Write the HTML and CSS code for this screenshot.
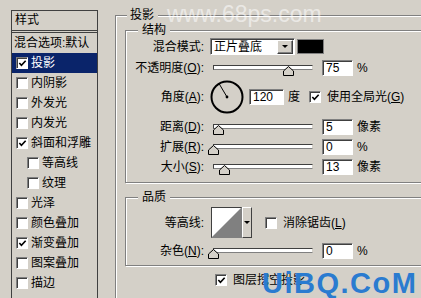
FILE: index.html
```html
<!DOCTYPE html>
<html lang="zh">
<head>
<meta charset="utf-8">
<title>图层样式</title>
<link rel="stylesheet" href="styles.css">
</head>
<body>
<div class="dialog">
  <div class="styles-panel">
    <div class="panel-head">样式</div>
    <div class="item plain">混合选项:默认</div>
    <div class="item top sel"><span class="cb"><svg viewBox="0 0 10 10"><polyline points="1.5,4.5 3.8,7 8.5,2"/></svg></span>投影</div>
    <div class="item top"><span class="cb"></span>内阴影</div>
    <div class="item top"><span class="cb"></span>外发光</div>
    <div class="item top"><span class="cb"></span>内发光</div>
    <div class="item top"><span class="cb"><svg viewBox="0 0 10 10"><polyline points="1.5,4.5 3.8,7 8.5,2"/></svg></span>斜面和浮雕</div>
    <div class="item sub"><span class="cb"></span>等高线</div>
    <div class="item sub"><span class="cb"></span>纹理</div>
    <div class="item top"><span class="cb"></span>光泽</div>
    <div class="item top"><span class="cb"></span>颜色叠加</div>
    <div class="item top"><span class="cb"><svg viewBox="0 0 10 10"><polyline points="1.5,4.5 3.8,7 8.5,2"/></svg></span>渐变叠加</div>
    <div class="item top"><span class="cb"></span>图案叠加</div>
    <div class="item top"><span class="cb"></span>描边</div>
  </div>

  <div class="main">
    <fieldset class="grp outer">
      <legend>投影</legend>

      <fieldset class="grp struct">
        <legend>结构</legend>

        <div class="row r-blend">
          <span class="lbl">混合模式:</span>
          <div class="select"><span class="sel-text">正片叠底</span><span class="sel-btn"><i class="tri"></i></span></div>
          <span class="swatch"></span>
        </div>

        <div class="row r-slider r-opacity">
          <span class="lbl">不透明度(<u>O</u>):</span>
          <div class="slider"><span class="track"></span><span class="thumb" style="left:75px"><svg viewBox="0 0 11 10"><polygon points="5.5,0.5 10.5,5 10.5,9.5 0.5,9.5 0.5,5"/></svg></span></div>
          <span class="num">75</span><span class="unit">%</span>
        </div>

        <div class="row r-angle">
          <span class="lbl">角度(<u>A</u>):</span>
          <svg class="dial" viewBox="0 0 34 34"><circle cx="17" cy="17" r="15.5"/><line x1="17" y1="17" x2="9" y2="3.5"/><circle class="dot" cx="17" cy="17" r="1.4"/></svg>
          <span class="num wide">120</span><span class="unit">度</span>
          <span class="cb gl"><svg viewBox="0 0 10 10"><polyline points="1.5,4.5 3.8,7 8.5,2"/></svg></span>
          <span class="cb-text">使用全局光(<u>G</u>)</span>
        </div>

        <div class="row r-slider r-dist">
          <span class="lbl">距离(<u>D</u>):</span>
          <div class="slider"><span class="track"></span><span class="thumb" style="left:5px"><svg viewBox="0 0 11 10"><polygon points="5.5,0.5 10.5,5 10.5,9.5 0.5,9.5 0.5,5"/></svg></span></div>
          <span class="num">5</span><span class="unit">像素</span>
        </div>

        <div class="row r-slider r-next">
          <span class="lbl">扩展(<u>R</u>):</span>
          <div class="slider"><span class="track"></span><span class="thumb" style="left:0px"><svg viewBox="0 0 11 10"><polygon points="5.5,0.5 10.5,5 10.5,9.5 0.5,9.5 0.5,5"/></svg></span></div>
          <span class="num">0</span><span class="unit">%</span>
        </div>

        <div class="row r-slider r-next">
          <span class="lbl">大小(<u>S</u>):</span>
          <div class="slider"><span class="track"></span><span class="thumb" style="left:11px"><svg viewBox="0 0 11 10"><polygon points="5.5,0.5 10.5,5 10.5,9.5 0.5,9.5 0.5,5"/></svg></span></div>
          <span class="num">13</span><span class="unit">像素</span>
        </div>
      </fieldset>

      <fieldset class="grp quality">
        <legend>品质</legend>

        <div class="row r-contour">
          <span class="lbl">等高线:</span>
          <div class="contour">
            <svg class="contour-img" viewBox="0 0 29 29" preserveAspectRatio="none"><polygon class="lo" points="0,29 29,0 29,29"/></svg>
            <span class="contour-btn"><i class="tri"></i></span>
          </div>
          <span class="cb aa"></span>
          <span class="cb-text">消除锯齿(<u>L</u>)</span>
        </div>

        <div class="row r-slider r-noise">
          <span class="lbl">杂色(<u>N</u>):</span>
          <div class="slider"><span class="track"></span><span class="thumb" style="left:0px"><svg viewBox="0 0 11 10"><polygon points="5.5,0.5 10.5,5 10.5,9.5 0.5,9.5 0.5,5"/></svg></span></div>
          <span class="num">0</span><span class="unit">%</span>
        </div>
      </fieldset>

      <div class="row r-knock">
        <span class="cb"><svg viewBox="0 0 10 10"><polyline points="1.5,4.5 3.8,7 8.5,2"/></svg></span>
        <span class="cb-text">图层挖空投影</span>
      </div>
    </fieldset>
  </div>
</div>
<div class="wm-top">www.68ps.com</div>
<div class="wm-bottom">UiBQ.CoM</div>
</body>
</html>
```
FILE: styles.css
```css
* { box-sizing: border-box; }

body {
  margin: 0;
  width: 421px;
  height: 298px;
  overflow: hidden;
  position: relative;
  background: #d4d0c8;
  color: #000;
  font-family: "Liberation Sans", "Noto Sans CJK SC", sans-serif;
  font-size: 12px;
  line-height: 14px;
}

u { text-decoration: underline; }

.dialog {
  display: flex;
  height: 298px;
  overflow: hidden;
}

/* ---------- left list ---------- */
.styles-panel {
  flex: none;
  width: 87px;
  margin: 10px 0 0 11px;
  border: 1px solid #404040;
  border-bottom: none;
}

.panel-head {
  height: 22px;
  line-height: 19px;
  padding-left: 3px;
  border-bottom: 3px double #404040;
}

.item {
  height: 20px;
  display: flex;
  align-items: center;
  white-space: nowrap;
}
.item.plain { padding-left: 2px; }
.item.top { padding-left: 4px; }
.item.sub { padding-left: 15px; }
.item .cb { margin-right: 3px; }
.item.sel { background: #0a246a; color: #fff; }

/* ---------- checkbox ---------- */
.cb {
  flex: none;
  display: inline-flex;
  align-items: center;
  justify-content: center;
  width: 12px;
  height: 12px;
  background: #fff;
  border: 1px solid;
  border-color: #808080 #fff #fff #808080;
  box-shadow: inset 1px 1px 0 #404040;
}
.cb svg {
  width: 9px;
  height: 9px;
  margin: 1px 0 0 1px;
}
.cb polyline {
  fill: none;
  stroke: #000;
  stroke-width: 1.8;
}

/* ---------- right side ---------- */
.main {
  flex: none;
  width: 330px;
  margin-left: 17px;
}

fieldset.grp {
  margin: 0;
  min-width: 0;
  border: 1px solid #808080;
  box-shadow: inset 1px 1px 0 #fff, 1px 1px 0 #fff;
}
fieldset.grp > legend {
  background: #d4d0c8;
  line-height: 14px;
  height: 14px;
}

.outer {
  width: 330px;
  min-height: 320px;
  margin-top: 8px !important;
  padding: 1px 0 0 9px;
}
.outer > legend {
  margin-left: 2px;
  padding: 0 4px 0 3px;
}

.struct,
.quality {
  width: 100%;
}
.struct > legend,
.quality > legend {
  margin-left: 12px;
  padding: 0 4px;
}
.struct { padding: 1px 0 7px 0; }
.quality { margin-top: 7px !important; padding: 3px 0 6px 0; }

.row {
  display: flex;
  align-items: center;
  white-space: nowrap;
}
.lbl {
  flex: none;
  width: 78px;
  text-align: right;
}

/* blend mode */
.r-blend { height: 17px; }
.select {
  flex: none;
  display: flex;
  align-items: center;
  width: 85px;
  height: 17px;
  margin-left: 6px;
  padding-left: 3px;
  background: #fff;
  border: 1px solid;
  border-color: #808080 #fff #fff #808080;
  box-shadow: inset 1px 1px 0 #404040;
}
.sel-text { flex: 1; }
.sel-btn {
  flex: none;
  display: flex;
  align-items: center;
  justify-content: center;
  width: 16px;
  height: 14px;
  margin-right: 1px;
  background: #d4d0c8;
  border: 1px solid;
  border-color: #fff #404040 #404040 #fff;
  box-shadow: inset -1px -1px 0 #808080;
}
.tri {
  display: block;
  width: 0;
  height: 0;
  border-left: 3px solid transparent;
  border-right: 3px solid transparent;
  border-top: 3px solid #000;
}
.swatch {
  flex: none;
  width: 27px;
  height: 15px;
  margin-left: 2px;
  background: #000;
  border: 1px solid #808080;
}

/* sliders */
.r-slider { height: 16px; }
.r-opacity { margin-top: 5px; }
.r-dist { margin-top: 5px; }
.r-next { margin-top: 4px; }
.r-noise { margin-top: 5px; }

.slider {
  flex: none;
  position: relative;
  width: 110px;
  height: 16px;
  margin-left: 4px;
}
.track {
  display: block;
  width: 100px;
  height: 5px;
  margin: 5px 0 0 5px;
  background: #fff;
  border: 1px solid;
  border-color: #404040 #d4d0c8 #808080 #404040;
}
.thumb {
  position: absolute;
  top: 6px;
  width: 11px;
  height: 10px;
}
.thumb svg {
  display: block;
  width: 11px;
  height: 10px;
}
.thumb polygon {
  fill: #d4d0c8;
  stroke: #000;
  stroke-width: 1;
}

.num {
  flex: none;
  width: 31px;
  height: 16px;
  margin-left: 4px;
  padding-left: 3px;
  line-height: 14px;
  background: #fff;
  border: 1px solid;
  border-color: #808080 #fff #fff #808080;
  box-shadow: inset 1px 1px 0 #404040;
}
.num.wide { width: 35px; margin-left: 5px; }
.unit { margin-left: 4px; }

/* angle */
.r-angle { height: 34px; margin-top: 4px; }
.dial {
  flex: none;
  width: 34px;
  height: 34px;
  margin-left: 6px;
}
.dial circle {
  fill: none;
  stroke: #000;
  stroke-width: 2;
}
.dial circle.dot { fill: #000; stroke: none; }
.dial line { stroke: #000; stroke-width: 1; }
.cb.gl { margin-left: 9px; }
.cb-text { margin-left: 6px; }

/* quality */
.r-contour { height: 31px; }
.contour {
  flex: none;
  display: flex;
  margin-left: 7px;
  height: 31px;
}
.contour-img {
  display: block;
  width: 31px;
  height: 31px;
  background: #fff;
  border: 1px solid;
  border-color: #404040 #808080 #808080 #404040;
}
.contour-img .lo { fill: #808080; }
.contour-btn {
  display: flex;
  align-items: center;
  justify-content: center;
  width: 10px;
  height: 31px;
  background: #d4d0c8;
  border: 1px solid;
  border-color: #fff #404040 #404040 #fff;
}
.cb.aa { margin-left: 13px; }

.r-knock {
  height: 13px;
  margin-top: 7px;
  padding-left: 90px;
}

/* watermarks */
.wm-top {
  position: absolute;
  left: 167px;
  top: 3px;
  font-size: 23px;
  line-height: 23px;
  color: rgba(255, 255, 255, 0.55);
}
.wm-bottom {
  position: absolute;
  left: 262px;
  top: 269px;
  font-size: 29px;
  line-height: 29px;
  font-weight: bold;
  letter-spacing: 1.5px;
  color: #2a7bd0;
}
```
